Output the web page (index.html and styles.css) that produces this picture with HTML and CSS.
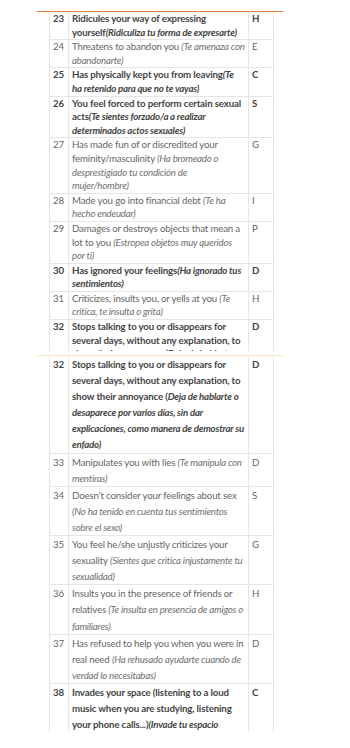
FILE: index.html
```html
<!DOCTYPE html>
<html lang="en">
<head>
<meta charset="utf-8">
<title>Abuse checklist</title>
<link rel="stylesheet" href="styles.css">
</head>
<body>
<section class="shot shot-a">
  <table class="grid">
    <colgroup><col class="c-num"><col class="c-text"><col class="c-code"></colgroup>
    <tbody>
      <tr class="strong"><td>23</td><td>Ridicules your way of expressing yourself<i>(Ridiculiza tu forma de expresarte)</i></td><td>H</td></tr>
      <tr><td>24</td><td>Threatens to abandon you <i>(Te amenaza con abandonarte)</i></td><td>E</td></tr>
      <tr class="strong"><td>25</td><td>Has physically kept you from leaving<i>(Te ha retenido para que no te vayas)</i></td><td>C</td></tr>
      <tr class="strong"><td>26</td><td>You feel forced to perform certain sexual acts<i>(Te sientes forzado/a a realizar determinados actos sexuales)</i></td><td>S</td></tr>
      <tr><td>27</td><td>Has made fun of or discredited your feminity/masculinity <i>(Ha bromeado o desprestigiado tu condición de mujer/hombre)</i></td><td>G</td></tr>
      <tr><td>28</td><td>Made you go into financial debt <i>(Te ha hecho endeudar)</i></td><td>I</td></tr>
      <tr><td>29</td><td>Damages or destroys objects that mean a lot to you <i>(Estropea objetos muy queridos por ti)</i></td><td>P</td></tr>
      <tr class="strong"><td>30</td><td>Has ignored your feelings<i>(Ha ignorado tus sentimientos)</i></td><td>D</td></tr>
      <tr><td>31</td><td>Criticizes, insults you, or yells at you <i>(Te critica, te insulta o grita)</i></td><td>H</td></tr>
      <tr class="strong"><td>32</td><td>Stops talking to you or disappears for several days, without any explanation, to show their annoyance (<i>Deja de hablarte o desaparece por varios días, sin dar explicaciones, como manera de demostrar su enfado)</i></td><td>D</td></tr>
    </tbody>
  </table>
</section>
<section class="shot shot-b">
  <table class="grid">
    <colgroup><col class="c-num"><col class="c-text"><col class="c-code"></colgroup>
    <tbody>
      <tr class="strong"><td>32</td><td>Stops talking to you or disappears for several days, without any explanation, to show their annoyance (<i>Deja de hablarte o desaparece por varios días, sin dar explicaciones, como manera de demostrar su enfado)</i></td><td>D</td></tr>
      <tr><td>33</td><td>Manipulates you with lies <i>(Te manipula con mentiras)</i></td><td>D</td></tr>
      <tr><td>34</td><td>Doesn’t consider your feelings about sex <i>(No ha tenido en cuenta tus sentimientos sobre el sexo)</i></td><td>S</td></tr>
      <tr><td>35</td><td>You feel he/she unjustly criticizes your sexuality <i>(Sientes que critica injustamente tu sexualidad)</i></td><td>G</td></tr>
      <tr><td>36</td><td>Insults you in the presence of friends or relatives <i>(Te insulta en presencia de amigos o familiares)</i></td><td>H</td></tr>
      <tr><td>37</td><td>Has refused to help you when you were in real need <i>(Ha rehusado ayudarte cuando de verdad lo necesitabas)</i></td><td>D</td></tr>
      <tr class="strong"><td>38</td><td>Invades your space (listening to a loud music when you are studying, listening your phone calls...)<i>(Invade tu espacio escuchando música alta cuando estudias, escuchando tus llamadas...)</i></td><td>C</td></tr>
    </tbody>
  </table>
</section>
</body>
</html>
```
FILE: styles.css
```css
html, body {
  margin: 0;
  padding: 0;
  background: #ffffff;
}

body {
  font-family: Lato, "Open Sans", sans-serif;
  font-size: 9.7px;
  letter-spacing: -0.17px;
  color: #666666;
}

.shot {
  width: 234px;
  margin-left: 37px;
  padding-left: 12px;
  overflow: hidden;
}

.shot-a {
  margin-top: 11px;
  border-top: 1px solid #e3843f;
  height: 339px;
}

.shot-b {
  margin-top: 4px;
  border-top: 1px solid #f7e2c3;
  height: 376px;
}

.grid {
  width: 224px;
  table-layout: fixed;
  border-collapse: collapse;
}

.c-num { width: 19px; }
.c-text { width: 180px; }
.c-code { width: 25px; }

.grid td {
  border: 1px solid #e6e6e6;
  padding: 0 3px;
  vertical-align: top;
  text-align: left;
}

.grid tr:first-child td {
  border-top: 0;
}

.shot-a .grid td { line-height: 13.6px; }
.shot-b .grid td { line-height: 16.1px; }

.grid i {
  color: #707070;
  letter-spacing: -0.22px;
}

.grid tr.strong td {
  font-weight: 700;
  letter-spacing: -0.15px;
  color: #444444;
}

.grid tr.strong i {
  color: #444444;
  letter-spacing: -0.22px;
}
```
